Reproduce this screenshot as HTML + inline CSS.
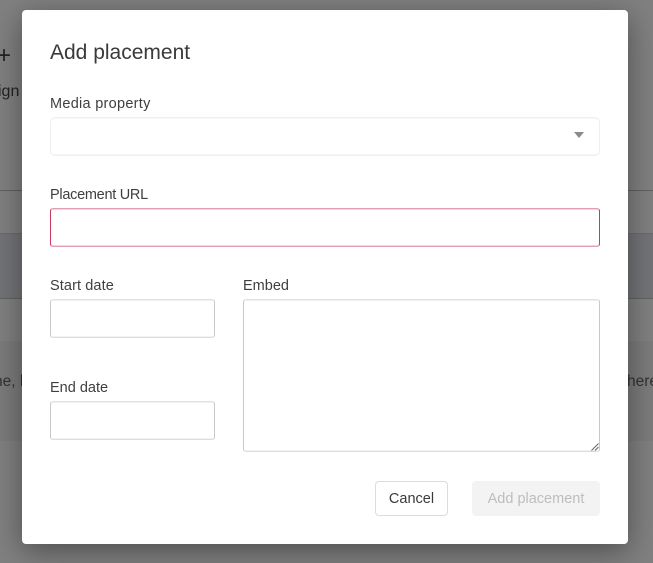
<!DOCTYPE html>
<html>
<head>
<meta charset="utf-8">
<style>
html,body{margin:0;padding:0;width:653px;height:563px;overflow:hidden;background:#808080;font-family:"Liberation Sans",sans-serif;color:#3d3d3d}
.a{position:absolute}
.field{position:absolute;box-sizing:border-box;background:#fff;border-radius:3px;border:1px solid #c6cacc;border-top-color:#dfe2e3;border-bottom-color:#dcdcdc;box-shadow:inset 0 1px 0 #eff0f0,inset 0 -1px 0 #f3f3f3}
.label{position:absolute;left:50px;font-size:14.5px;line-height:18px;color:#3f3f3f;white-space:nowrap}
</style>
</head>
<body>
<div class="a" style="left:0;top:0;width:653px;height:563px;overflow:hidden">
  <div class="a" style="left:0;top:190px;width:653px;height:1px;background:#5f6165"></div>
  <div class="a" style="left:0;top:233px;width:653px;height:65px;background:#727477"></div>
  <div class="a" style="left:0;top:233px;width:653px;height:1px;background:#6c6c6c"></div>
  <div class="a" style="left:0;top:298px;width:653px;height:1px;background:#626262"></div>
  <div class="a" style="left:0;top:341px;width:653px;height:100px;background:#7b7b7b"></div>
  <div class="a" style="left:-3px;top:43px;font-size:24px;line-height:26px;color:#222">+</div>
  <div class="a" style="left:-10px;top:82px;font-size:16px;line-height:20px;color:#222">sign</div>
  <div class="a" style="left:-6px;top:372px;font-size:15.5px;line-height:20px;color:#333">ne, l</div>
  <div class="a" style="left:627px;top:372px;font-size:15.5px;line-height:20px;color:#333">here</div>
</div>

<div class="a" style="left:22px;top:10px;width:606px;height:534px;background:#fff;border-radius:4px;box-shadow:0 7px 30px rgba(0,0,0,.4)"></div>

<div class="a" style="left:50px;top:40px;font-size:21px;line-height:26px;color:#3a3a3a;white-space:nowrap">Add placement</div>

<div class="label" style="top:95px;letter-spacing:.28px">Media property</div>
<div class="field" style="left:50px;top:117px;width:550px;height:39px;border-color:#efefef;box-shadow:inset 0 1px 0 #f7f7f7,inset 0 -1px 0 #f7f7f7;border-radius:5px"></div>
<svg class="a" style="left:573px;top:131px" width="12" height="8"><path d="M1 1H11L6 7Z" fill="#8a8a8a"/></svg>

<div class="label" style="top:186px;letter-spacing:-.28px">Placement URL</div>
<div class="field" style="left:50px;top:208px;width:550px;height:39px;border-color:#c9385f;border-top-color:#e19fb1;border-bottom-color:#e19fb1;box-shadow:inset 0 1px 0 #f3d3dc,inset 0 -1px 0 #f3d3dc"></div>

<div class="label" style="top:277px;letter-spacing:.1px">Start date</div>
<div class="field" style="left:50px;top:299px;width:165px;height:39px"></div>

<div class="label" style="top:379px">End date</div>
<div class="field" style="left:50px;top:401px;width:165px;height:39px"></div>

<div class="label" style="left:243px;top:277px">Embed</div>
<div class="field" style="left:243px;top:299px;width:357px;height:153px"></div>
<svg class="a" style="left:591px;top:443px" width="8" height="8"><path d="M0.5 7.5L7.5 0.5M4 7.5L7.5 4" stroke="#666" stroke-width="1" fill="none"/></svg>

<div class="a" style="left:375px;top:481px;width:73px;height:35px;box-sizing:border-box;border:1px solid #dcdcdc;border-radius:4px;background:#fff;text-align:center;font-size:14.5px;line-height:35px;color:#3a3a3a">Cancel</div>
<div class="a" style="left:472px;top:481px;width:128px;height:35px;border-radius:4px;background:#f3f3f3;text-align:center;font-size:14.5px;line-height:37px;color:#bdbdbd;white-space:nowrap">Add placement</div>
</body>
</html>
